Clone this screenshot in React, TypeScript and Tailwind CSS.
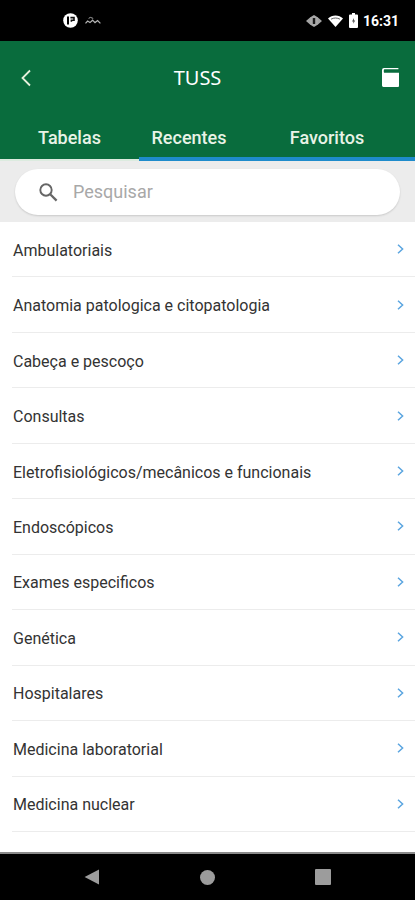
import { useState } from 'react';
import { clsx } from 'clsx';

const tabs = ['Tabelas', 'Recentes', 'Favoritos'];

const tables = [
  'Ambulatoriais',
  'Anatomia patologica e citopatologia',
  'Cabeça e pescoço',
  'Consultas',
  'Eletrofisiológicos/mecânicos e funcionais',
  'Endoscópicos',
  'Exames especificos',
  'Genética',
  'Hospitalares',
  'Medicina laboratorial',
  'Medicina nuclear',
];

function StatusBar() {
  return (
    <div className="flex h-[41px] items-center bg-black pl-[63px] pr-4 text-white">
      <svg className="h-[15px] w-[15px]" viewBox="0 0 15 15" aria-hidden="true">
        <circle cx="7.5" cy="7.5" r="7.3" fill="#fff" />
        <path d="M5 3.6v8" fill="none" stroke="#000" strokeWidth="2" />
        <path d="M7.4 4.6h3.6v2.6H8.4v1.6" fill="none" stroke="#111" strokeWidth="1.6" />
      </svg>
      <svg
        className="ml-[7px] h-[9px] w-4"
        viewBox="0 0 16 9"
        fill="none"
        stroke="#b5b5b5"
        strokeWidth="1.2"
        aria-hidden="true"
      >
        <path d="M0.5 7.4L2.6 5L5 6.6L7.6 4.2L10 6.6L12.6 4.6L15.4 7.4" />
        <path d="M3.6 2.4L5.4 1.4L8.2 2.4" strokeWidth="0.9" />
      </svg>

      <div className="ml-auto flex items-center">
        <svg className="h-3 w-4" viewBox="0 0 16 12" aria-hidden="true">
          <path d="M0 6L4.6 2V10zM16 6L11.4 2V10z" fill="#a3a3a3" />
          <path d="M8 0L12 2.4V9.6L8 12L4 9.6V2.4z" fill="#a8a8a8" />
          <rect x="6.8" y="3" width="2.4" height="6" rx="0.6" fill="#1a1a1a" />
        </svg>
        <svg className="ml-[6px] h-3 w-[15px]" viewBox="0 0 15 12" aria-hidden="true">
          <path d="M0 3.4C4 -0.6 11 -0.6 15 3.4L7.5 12z" fill="#fff" />
          <path d="M3 4.2C5.8 2.6 9.2 2.6 12 4.2" fill="none" stroke="#666" strokeWidth="1" />
        </svg>
        <svg className="ml-[6px] h-[15px] w-[9px]" viewBox="0 0 9 15" aria-hidden="true">
          <path d="M3 0h3v1.5h2a1 1 0 0 1 1 1V14a1 1 0 0 1-1 1H1a1 1 0 0 1-1-1V2.5a1 1 0 0 1 1-1h2z" fill="#fff" />
          <path d="M5 5L3 8.4h1.3v2.4L6.2 7.6H5z" fill="#555" />
        </svg>
        <span className="ml-[5px] text-sm font-bold leading-none">16:31</span>
      </div>
    </div>
  );
}

function Header() {
  return (
    <header className="grid h-[73px] grid-cols-[1fr_auto_1fr] items-center bg-[#096c3d] pl-[14px] pr-[10px] text-white">
      <button type="button" aria-label="Voltar" className="flex h-8 w-6 items-center justify-center">
        <svg className="h-[18px] w-[10px]" viewBox="0 0 10 18" fill="none" stroke="#e6f0dc" strokeWidth="1.8">
          <path d="M9 1.5L1.5 9L9 16.5" />
        </svg>
      </button>
      <h1 className="mr-6 font-['Noto_Sans',sans-serif] text-xl leading-6">TUSS</h1>
      <button
        type="button"
        aria-label="Tabela"
        className="flex h-8 w-7 items-center justify-center justify-self-end"
      >
        <svg className="h-[19px] w-[18px]" viewBox="0 0 18 19" fill="#fff">
          <path d="M2 0H16.4V1.2H2.4C1.6 1.2 1.6 4.8 2.4 4.8H17V18a1 1 0 0 1-1 1H1.4A1.4 1.4 0 0 1 0 17.6V2A2 2 0 0 1 2 0z" />
        </svg>
      </button>
    </header>
  );
}

function SearchBar({ value, onChange }: { value: string; onChange: (value: string) => void }) {
  return (
    <div className="bg-[#ececec] px-[15px] pb-[7px] pt-2">
      <div className="flex h-[46px] items-center rounded-full bg-white px-6 shadow-[0_1px_2px_rgba(0,0,0,0.15)]">
        <svg
          className="h-[19px] w-[19px] shrink-0"
          viewBox="0 0 19 19"
          fill="none"
          stroke="#666"
          strokeWidth="1.9"
          aria-hidden="true"
        >
          <circle cx="7" cy="7" r="5.7" />
          <path d="M11.2 11.2L17.6 17.6" strokeWidth="2.3" />
        </svg>
        <input
          type="text"
          aria-label="Pesquisar"
          value={value}
          onChange={(e) => onChange(e.target.value)}
          placeholder="Pesquisar"
          className="ml-[15px] min-w-0 flex-1 bg-transparent text-lg leading-8 text-gray-800 outline-none placeholder:text-[#a8a8a8]"
        />
      </div>
    </div>
  );
}

function NavigationBar() {
  return (
    <nav className="grid h-12 grid-cols-[1fr_auto_1fr] items-center border-t-2 border-[#8a8a8a] bg-black px-[84px]">
      <button type="button" aria-label="Voltar" className="h-4 w-4">
        <svg className="h-4 w-4" viewBox="0 0 16 16" fill="#9c9c9c">
          <path d="M0.6 8L15 0.4V15.6z" />
        </svg>
      </button>
      <button type="button" aria-label="Início" className="h-[15px] w-[15px] rounded-full bg-[#9c9c9c]" />
      <button type="button" aria-label="Aplicativos" className="h-4 w-4 justify-self-end rounded-[1px] bg-[#9c9c9c]" />
    </nav>
  );
}

export default function App() {
  const [activeTab, setActiveTab] = useState('Tabelas');
  const [query, setQuery] = useState('');

  const visible = tables.filter((name) => name.toLowerCase().includes(query.toLowerCase()));

  return (
    <div className="flex min-h-screen flex-col bg-white font-['Roboto',sans-serif]">
      <StatusBar />
      <Header />

      <div role="tablist" className="grid h-[47px] grid-cols-[139fr_100fr_176fr] bg-[#096c3d]">
        {tabs.map((tab) => (
          <button
            key={tab}
            type="button"
            role="tab"
            aria-selected={activeTab === tab}
            onClick={() => setActiveTab(tab)}
            className={clsx(
              'pt-1 text-lg font-medium leading-6 text-[#e8f3e6]',
              activeTab === tab ? 'border-b-2 border-[#dcebdf] pb-px' : 'border-b-4 border-[#1e8bcb]',
            )}
          >
            {tab}
          </button>
        ))}
      </div>

      <SearchBar value={query} onChange={setQuery} />

      <main className="flex flex-1 flex-col pb-5">
        <ul className="grid flex-1 auto-rows-fr pl-3">
          {visible.map((name) => (
            <li key={name} className="flex border-b border-[#ececec]">
              <button
                type="button"
                className="flex min-h-12 flex-1 items-center justify-between pl-px pr-[11px] text-left text-base text-[#333]"
              >
                <span className="pt-[3px]">{name}</span>
                <svg
                  className="h-[10px] w-[7px] shrink-0"
                  viewBox="0 0 7 10"
                  fill="none"
                  stroke="#5aa5e0"
                  strokeWidth="1.5"
                  aria-hidden="true"
                >
                  <path d="M1 0.8L5.6 5L1 9.2" />
                </svg>
              </button>
            </li>
          ))}
        </ul>
      </main>

      <NavigationBar />
    </div>
  );
}
